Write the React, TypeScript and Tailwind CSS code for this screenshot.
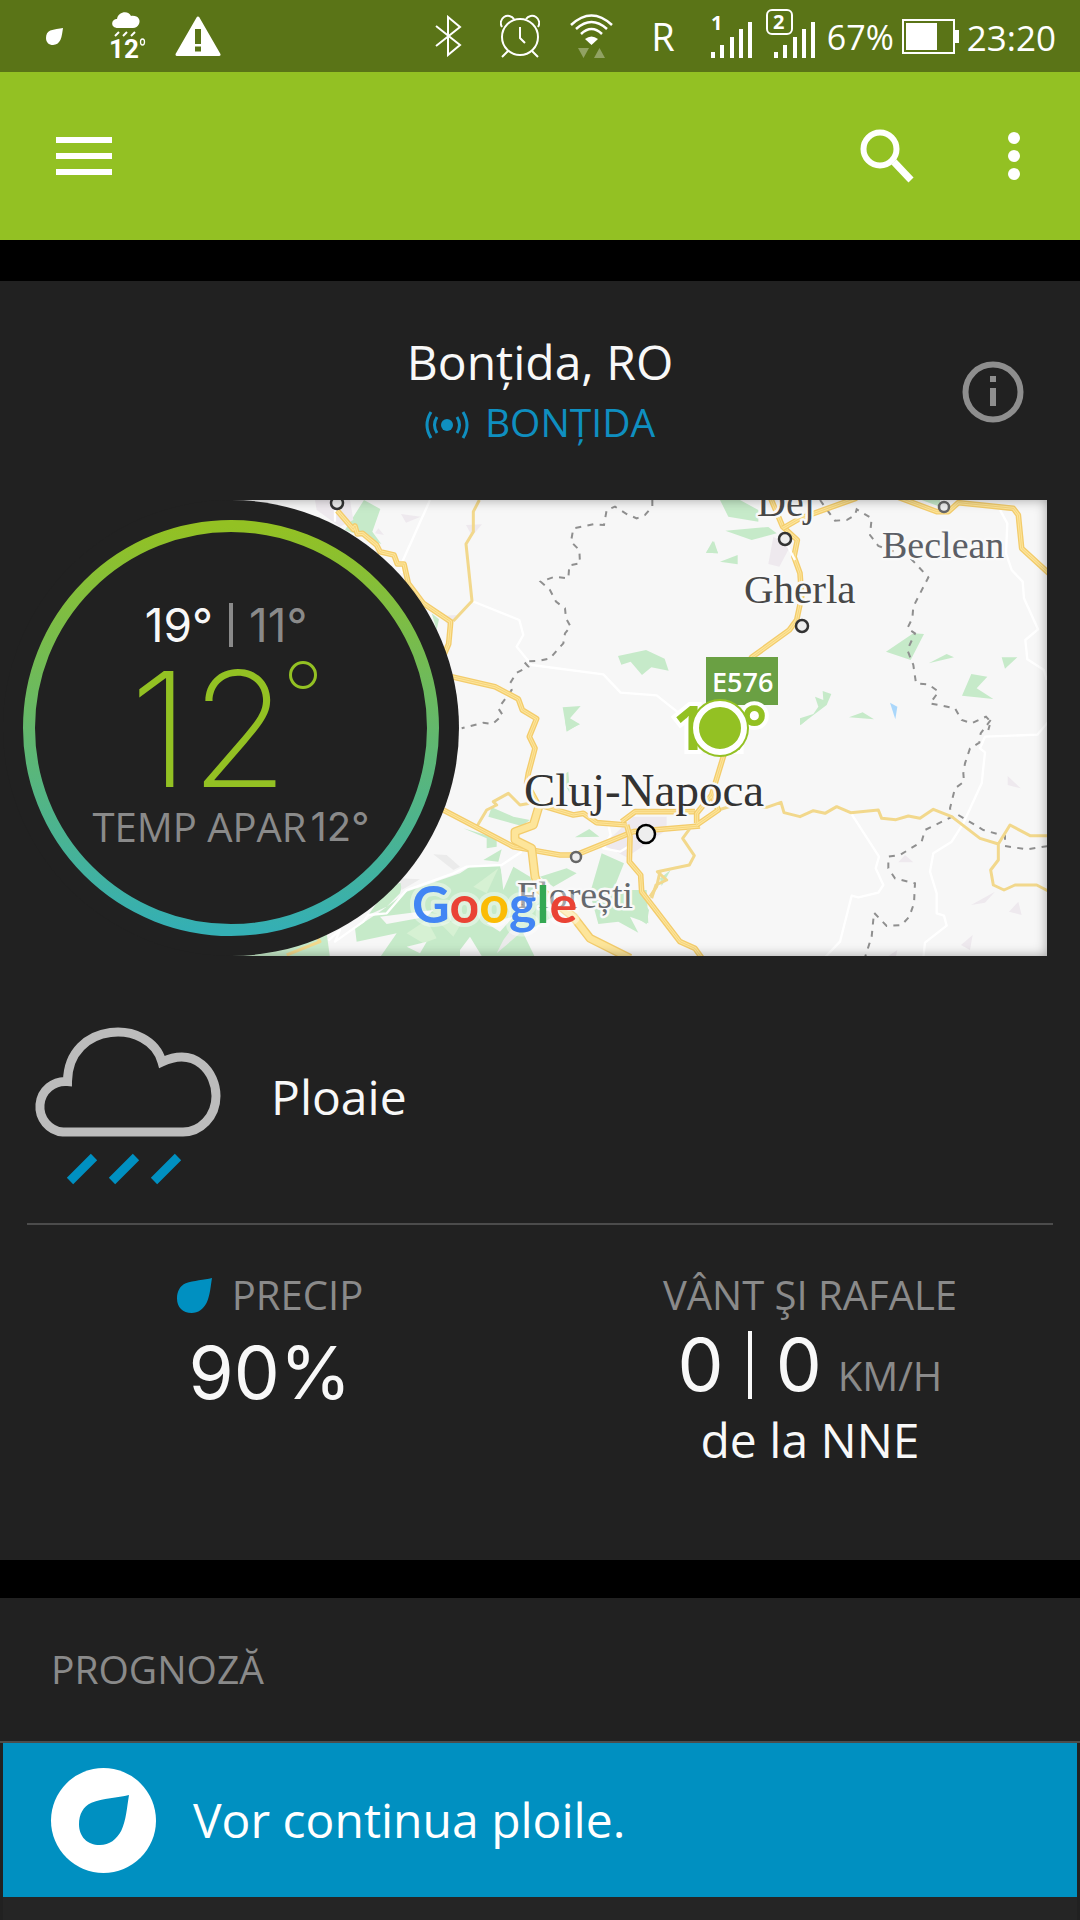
import type { ReactNode } from "react";

type Town = { x: number; y: number; r: number; color: string };

function Drop({ className }: { className?: string }) {
  return (
    <svg viewBox="0 0 36 36" className={className} fill="currentColor" aria-hidden="true">
      <path d="M36 0C34.500 9 34 18 30.500 25.500C27 32 22 36 15 36C6 36 0 30 0 21C0 14 3 8 9 5.500C17 2.500 28 2 36 0Z" />
    </svg>
  );
}

function SignalBars() {
  return (
    <g>
      <rect x="0" y="40" width="4" height="6" />
      <rect x="9" y="33" width="4" height="13" />
      <rect x="19" y="25" width="4" height="21" />
      <rect x="28" y="17" width="4" height="29" />
      <rect x="37" y="10" width="4" height="36" />
    </g>
  );
}

function StatusBar() {
  return (
    <div className="flex h-[72px] items-center justify-between bg-[#5a7417] pr-6 pl-[46px] text-white">
      <div className="flex items-center">
        <Drop className="size-[17px]" />
        <svg viewBox="0 0 34 48" className="ml-12 h-12 w-[34px] overflow-visible" fill="currentColor" aria-hidden="true">
          <path d="M7 16C-1 16 0 7 6 7C7 -1 18 -2 20 4C27 3 30 8 28 12Q26 16 22 16Z" />
          <path d="M4 24l4-4M12 24l4-4M20 24l4-4" stroke="currentColor" strokeWidth="2" />
          <text x="-2" y="46" fontSize="26" fontWeight="700" fontFamily="Roboto, sans-serif">
            12
          </text>
          <ellipse cx="31.500" cy="30" rx="2" ry="3" fill="none" stroke="currentColor" strokeWidth="1.300" />
        </svg>
        <svg viewBox="0 0 46 41" className="ml-[30px] h-[41px] w-[46px]" aria-hidden="true">
          <path d="M23 2L44 38.500H2Z" fill="white" stroke="white" strokeWidth="3" strokeLinejoin="round" />
          <path d="M20 13h6v15h-6zM20 30.500h6v5h-6z" fill="#5a7417" />
        </svg>
      </div>

      <div className="flex items-center">
        <svg viewBox="0 0 27 42" className="mr-[38px] h-[42px] w-[27px]" fill="none" stroke="white" strokeWidth="2" aria-hidden="true">
          <path d="M1 11L25 30L13 40V2L25 12L1 31" />
        </svg>
        <svg viewBox="0 0 40 44" className="mr-[30px] h-11 w-10" fill="none" stroke="white" strokeWidth="2" aria-hidden="true">
          <circle cx="20" cy="23" r="18" />
          <path d="M20 13V24L25 29M8 37L2 43M32 37L38 43" />
          <path d="M2 13A6.500 6.500 0 1 1 14 5M38 13A6.500 6.500 0 1 0 26 5" />
        </svg>
        <svg viewBox="0 0 43 44" className="mr-[38px] h-11 w-[43px]" fill="none" stroke="white" strokeWidth="2.500" aria-hidden="true">
          <path d="M1 11Q21.500 -8 42 11M6 15Q21.500 1 37 15M11 20Q21.500 10 32 20" />
          <path d="M15 25Q21.500 20 28 25L21.500 31Z" fill="white" stroke="none" />
          <path d="M8 34H19L13.500 44ZM24 44H35L29.500 34Z" fill="#91a263" stroke="none" />
        </svg>
        <span className="mr-9 text-[38px] leading-none">R</span>
        <svg viewBox="0 0 106 48" className="mr-2.5 h-12 w-[106px] overflow-visible" fill="white" fontFamily="Open Sans, sans-serif" fontWeight="700" aria-hidden="true">
          <SignalBars />
          <text x="0" y="18" fontSize="20">
            1
          </text>
          <g transform="translate(63 0)">
            <SignalBars />
          </g>
          <rect x="56" y="-2" width="25" height="24" rx="5" fill="#5a7417" stroke="white" strokeWidth="2" />
          <text x="62" y="17" fontSize="20">
            2
          </text>
        </svg>
        <span className="mr-2 pt-0.5 text-[34px] leading-none">67%</span>
        <svg viewBox="0 0 57 35" className="mr-2 h-[35px] w-[57px]" fill="white" aria-hidden="true">
          <rect x="1" y="1" width="51" height="33" fill="none" stroke="white" strokeWidth="2" />
          <rect x="4" y="4" width="31" height="27" />
          <rect x="52" y="11" width="5" height="13" />
        </svg>
        <span className="pt-0.5 text-[35px] leading-none">23:20</span>
      </div>
    </div>
  );
}

function AppBar() {
  return (
    <header className="flex h-[168px] items-center justify-between bg-[#93c123] pr-12 pl-14 text-white">
      <button type="button" aria-label="Meniu" className="flex w-14 flex-col gap-2.5 py-2">
        <span className="h-1.5 w-full bg-white" />
        <span className="h-1.5 w-full bg-white" />
        <span className="h-1.5 w-full bg-white" />
      </button>
      <div className="flex items-center gap-[82px]">
        <button type="button" aria-label="Căutare">
          <svg viewBox="0 0 54 54" className="size-[54px]" fill="none" stroke="white" strokeWidth="6">
            <circle cx="20" cy="20" r="16.500" />
            <path d="M34 33L51 51" strokeWidth="7" />
          </svg>
        </button>
        <button type="button" aria-label="Mai multe opțiuni" className="flex w-9 flex-col items-center gap-1.5">
          <span className="size-3 rounded-full bg-white" />
          <span className="size-3 rounded-full bg-white" />
          <span className="size-3 rounded-full bg-white" />
        </button>
      </div>
    </header>
  );
}

// Each quarter of the map is drawn on a grid three times finer than the page.
function Tile({ x, y, children }: { x: number; y: number; children: ReactNode }) {
  return <g transform={`translate(${x} ${y}) scale(0.33333)`}>{children}</g>;
}

function Road({ d }: { d: string }) {
  return (
    <g fill="none" strokeLinejoin="round">
      <path d={d} stroke="#f3cc6c" strokeWidth="17" />
      <path d={d} stroke="#fde59a" strokeWidth="9" />
      <path d={d} stroke="#f3cc6c" strokeWidth="2" />
    </g>
  );
}

function Highway({ d }: { d: string }) {
  return (
    <g fill="none" strokeLinejoin="round">
      <path d={d} stroke="#f3cc6c" strokeWidth="27" />
      <path d={d} stroke="#fde59a" strokeWidth="19" />
    </g>
  );
}

function MinorRoad({ d }: { d: string }) {
  return <path d={d} fill="none" stroke="#f2d88c" strokeWidth="9" strokeLinejoin="round" />;
}

function Lane({ d }: { d: string }) {
  return <path d={d} fill="none" stroke="#ffffff" strokeWidth="7" strokeLinejoin="round" />;
}

function Border({ d }: { d: string }) {
  return <path d={d} fill="none" stroke="#8f8f8f" strokeWidth="6" strokeDasharray="18 19" />;
}

const towns: Town[] = [
  { x: 337, y: 503, r: 6, color: "#333333" },
  { x: 785, y: 539, r: 6, color: "#333333" },
  { x: 944, y: 507, r: 5, color: "#666666" },
  { x: 802, y: 626, r: 6, color: "#333333" },
  { x: 576, y: 857, r: 5, color: "#666666" },
  { x: 646, y: 834, r: 9, color: "#000000" },
];

const labels = [
  { name: "Dej", x: 757, y: 516, size: 40, color: "#484848" },
  { name: "Gherla", x: 744, y: 603, size: 41, color: "#484848" },
  { name: "Beclean", x: 882, y: 558, size: 38, color: "#5c5f66" },
  { name: "Cluj-Napoca", x: 524, y: 806, size: 47, color: "#333333" },
  { name: "Florești", x: 517, y: 908, size: 38, color: "#66696e" },
];

function Map() {
  return (
    <svg viewBox="231 500 816 456" preserveAspectRatio="xMidYMid slice" className="h-full w-full bg-[#f7f7f7]" role="img" aria-label="Hartă Cluj-Napoca">
      <Tile x={320} y={490}>
        <path fill="#c6eac9" d="M132 30L181 57L157 125L184 162L130 140L75 120ZM335 370L357 388L350 420ZM894 498L978 480L1034 506L1046 542L994 532L966 555L932 515L904 524ZM728 652L782 648L750 685L780 703L740 722ZM1182 153L1194 190L1158 188Z" />
        <path fill="#eee9ee" d="M-15 30H90L100 90L60 110L-10 60ZM243 72L302 80L258 98ZM438 105L486 103L456 138ZM175 115L192 135L165 130ZM365 378L410 375L390 415Z" />
        <Lane d="M330 30L245 220V250M45 60V95M456 333L598 390L610 435L590 470L635 525L850 553L902 608L1010 616L1090 680" />
        <Border d="M997 30V50L975 75L950 85L920 72L885 50L860 60L852 105L820 103L760 115L753 155L778 180L780 220L748 226L745 265L705 260L662 275L690 300L708 335L735 355L738 385L752 410L735 430L730 460L712 480L690 505L660 512L612 515L625 530L590 548L570 580L575 600L535 655L548 675L518 702L490 698L425 715" />
        <MinorRoad d="M478 30L460 65V125L438 162L456 333L400 393" />
        <Road d="M52 62L100 118L105 108L112 132L128 130L170 165L180 185L222 195L232 222L252 222L265 280L310 340L392 395L386 462L365 510" />
        <Road d="M395 560L525 590L595 627L607 660L650 686L628 740L645 775L625 850L620 880L658 950" />
      </Tile>
      <Tile x={700} y={490}>
        <path fill="#c6eac9" d="M60 30H120L175 60V95L85 80ZM76 122L205 111L230 130L155 150ZM38 153L54 190L18 188ZM60 215L113 195V223ZM665 30H720V50ZM558 485L640 430L672 432L632 510ZM686 520L740 492L762 502ZM905 502H952L915 536ZM814 552L862 560L830 595L880 627L786 617ZM300 685L340 672L355 650L345 620L370 630L368 603L394 612L380 645L300 706ZM447 682L488 667L522 688Z" />
        <path fill="#aad7fb" d="M570 638L592 650L586 688Z" />
        <path fill="#eee9ee" d="M220 140L270 170L238 230L205 222Z" />
        <Lane d="M900 60L922 100L918 190L935 240L968 275L972 325L1014 418L976 450L982 508L1032 540L1040 570" />
        <Border d="M360 30L385 65L405 92L440 90L465 75L470 58L515 85L510 135L535 168L570 180L632 205L685 262L640 350L637 385L622 415L645 430L622 480L640 525L648 580L685 583L716 605L690 640L765 655L785 690L815 700L858 680L872 695L865 720" />
        <Road d="M210 20L248 110L292 150L282 200L300 250L305 320L290 390L268 420L155 502L70 620" />
        <Road d="M248 115L300 85L470 24M590 20L710 65L745 65L775 38L940 55L955 75L965 175L1050 253" />
        <Lane d="M262 165L285 210" />
      </Tile>
      <Tile x={220} y={720}>
        <path fill="#c6eac9" d="M1035 0L1078 12L1040 35ZM815 262L880 290L930 300L905 318L805 290ZM730 325L830 355V380L800 385V355ZM1020 170L1045 155L1050 220ZM845 388L835 425L790 420ZM1065 352L1108 327L1138 350ZM1145 400L1212 430L1180 510L1280 510L1285 610L1230 590L1255 638L1195 605L1135 612L1110 520ZM960 470L1040 445L1070 460L1000 500ZM505 500L550 485L540 520L500 560L445 585ZM0 712L320 640L330 712ZM480 575L560 515L720 460L750 440L840 437L850 480L880 440L930 470L960 540L1000 590L910 640L945 712H480L530 640L410 665L405 625Z" />
        <path fill="#d6f1d3" d="M560 640L620 600L650 655L610 670ZM660 610L730 600L700 650ZM760 500L835 445L800 520Z" />
        <path fill="#f7f7f7" d="M480 590L640 570L620 590L500 612ZM720 690L750 650L785 708H720ZM560 680L620 665L600 700ZM800 610L880 590L840 635ZM842 440L880 440L850 510Z" />
        <path fill="#ebebeb" d="M640 403L680 405L720 440L700 450ZM540 475L600 478L545 510ZM850 660L880 620L900 640L830 700Z" />
        <path fill="#eee9ee" d="M1150 375L1240 290H1340V330L1220 412Z" />
        <Lane d="M325 662L360 630L345 665L430 605L445 585L500 580L560 510L590 500L700 460L740 440L845 435L905 395M1165 315L1172 345L1150 385L1200 395L1225 380" />
        <MinorRoad d="M770 320L800 270L830 255L820 245L865 220L900 255L930 250M1320 455L1310 500L1290 530M200 705L300 665L290 650" />
        <Road d="M670 270L880 380L1020 405H1068L1240 335L1440 318" />
        <Road d="M960 255L1060 285L1090 280L1130 308L1220 315M1205 305L1245 275H1425M1220 315L1230 350L1228 425L1262 465L1265 515L1380 665L1425 685L1450 720" />
        <Highway d="M958 255L940 315L885 335V360L935 385L945 470L960 510L1060 590L1110 655L1230 715" />
      </Tile>
      <Tile x={640} y={720}>
        <path fill="#c6eac9" d="M60 475L92 450L65 498ZM0 530L27 570L20 613L0 600ZM480 0H500L482 15Z" />
        <path fill="#eee9ee" d="M1103 168L1142 205L1103 195ZM795 405L820 427H775ZM993 555L1065 515L1035 548ZM1135 545L1145 585L1107 575ZM998 645L990 690L963 675ZM772 690L768 708H745Z" />
        <Lane d="M632 278L717 410L707 445L730 495L715 518L655 532L635 527L600 665L555 712M1225 5L1192 44L1035 50L1020 85L1035 97L1025 190L970 310L935 365L880 400L870 455L890 520V580L912 587L920 617L855 668L850 712" />
        <Border d="M1052 0L1022 40L1018 68L990 85L975 130L970 160L972 185L945 205L930 265L937 290L855 330L845 365L780 405L745 410V445L765 475L825 490L822 550L808 590L785 615L740 618L702 578L695 650L675 712M955 285L1030 330L1095 348V378L1160 388L1225 378" />
        <MinorRoad d="M235 270L300 250L380 262L423 247L432 278L480 290L520 272L555 280L590 260L632 278L715 270L725 295L768 299L805 288L840 295L880 268L935 290L1020 355L1075 372L1110 315L1170 347H1225M1075 372V420L1052 450L1060 495L1092 510L1125 495H1190L1225 513M150 325L128 355L163 407L148 435L52 455L80 480L48 495L35 535" />
        <Road d="M253 100L215 225L170 280V310M215 225L235 270L170 315" />
      </Tile>

      {towns.map((town) => (
        <circle key={`${town.x}-${town.y}`} cx={town.x} cy={town.y} r={town.r} fill="#eeeeee" stroke={town.color} strokeWidth="2.500" />
      ))}

      <g fontFamily="Liberation Serif, serif" stroke="#f9f9f9" strokeWidth="5" strokeLinejoin="round" paintOrder="stroke">
        {labels.map((label) => (
          <text key={label.name} x={label.x} y={label.y} fontSize={label.size} fill={label.color}>
            {label.name}
          </text>
        ))}
      </g>

      <rect x="706" y="657" width="72" height="48" fill="#6aa043" />
      <text x="712" y="692" fontSize="27" fontWeight="600" fontFamily="Open Sans, sans-serif" fill="white">
        E576
      </text>
      <text x="720" y="750" textAnchor="middle" fontSize="60" fontWeight="700" fontFamily="Open Sans, sans-serif" fill="#93c123" stroke="white" strokeWidth="8" paintOrder="stroke">
        12°
      </text>
      <circle cx="720" cy="728" r="29" fill="#93c123" />
      <circle cx="720" cy="728" r="24" fill="#93c123" stroke="white" strokeWidth="6" />

      <text x="412" y="923" fontSize="52" fontFamily="Lato, sans-serif" fontWeight="700" stroke="#ffffff" strokeOpacity="0.4" strokeWidth="8" strokeLinejoin="round" paintOrder="stroke">
        <tspan fill="#4285f4">G</tspan>
        <tspan fill="#ea4335">o</tspan>
        <tspan fill="#fbbc05">o</tspan>
        <tspan fill="#4285f4">g</tspan>
        <tspan fill="#34a853">l</tspan>
        <tspan fill="#ea4335">e</tspan>
      </text>
    </svg>
  );
}

function TemperatureDial() {
  return (
    <div className="absolute top-0 left-[3px] flex size-[456px] flex-col items-center rounded-full bg-[#212121] pt-[97px]">
      <svg viewBox="0 0 456 456" className="absolute inset-0 size-full" fill="none" aria-hidden="true">
        <defs>
          <linearGradient id="ring" x1="0" y1="0" x2="0" y2="1">
            <stop offset="0" stopColor="#93c123" />
            <stop offset="1" stopColor="#34afb4" />
          </linearGradient>
        </defs>
        <circle cx="228" cy="228" r="202" stroke="url(#ring)" strokeWidth="12" />
      </svg>
      <p className="grid w-full grid-cols-[1fr_auto_1fr] items-center gap-4 font-[Inter,sans-serif] text-[46px] leading-[56px] text-[#8a8a8a]">
        <span className="text-right text-[#f8f8f8]">19°</span>
        <span className="h-11 w-1 bg-[#8a8a8a]" />
        <span>11°</span>
      </p>
      <p className="mt-2 flex h-[136px] items-start pr-4 font-[Inter,sans-serif] text-[160px] leading-[136px] font-extralight text-[#93c123]">
        12
        <span className="size-7 rounded-full border-3 border-[#93c123]" />
      </p>
      <p className="flex gap-1 text-[40px] leading-[60px] text-[#8a8a8a]">
        TEMP APAR<span className="font-[Inter,sans-serif]">12°</span>
      </p>
    </div>
  );
}

function CurrentConditions() {
  return (
    <main className="mt-[41px] bg-[#212121] pb-[85px]">
      <div className="grid h-[219px] grid-cols-[1fr_auto_1fr] items-center px-14 pt-0.5">
        <div className="col-start-2 text-center">
          <h1 className="text-[48px] leading-[60px] font-medium text-[#f8f8f8]">Bonțida, RO</h1>
          <a href="#bontida" className="flex items-center justify-center gap-4 text-[39px] leading-[60px] text-[#0f8fc0]">
            <svg viewBox="0 0 44 34" className="h-[34px] w-11" fill="none" stroke="currentColor" strokeWidth="3" aria-hidden="true">
              <circle cx="22" cy="20" r="6" fill="currentColor" stroke="none" />
              <path d="M6 7Q-2 20 6 33M12 12Q7 20 12 28M38 7Q46 20 38 33M32 12Q37 20 32 28" />
            </svg>
            BONȚIDA
          </a>
        </div>
        <button type="button" aria-label="Informații" className="justify-self-end text-[#8e8e8e]">
          <svg viewBox="0 0 62 62" className="size-[62px]" fill="none" stroke="currentColor" strokeWidth="6">
            <circle cx="31" cy="31" r="27.500" />
            <path d="M31 15V21M31 27V45" />
          </svg>
        </button>
      </div>

      <div className="relative mr-[33px]">
        <div className="relative ml-[231px] h-[456px]">
          <Map />
          <div className="absolute inset-0 shadow-[inset_0_0_12px_rgba(0,0,0,0.35)]" />
        </div>
        <TemperatureDial />
      </div>

      <section className="mx-[27px] flex items-center gap-[50px] border-b-2 border-[#4c4c4c] pt-[69px] pb-[38px] pl-1.5">
        <svg viewBox="0 0 188 160" className="h-40 w-[188px]" fill="none" strokeWidth="9" aria-hidden="true">
          <path d="M30 107A25 25 0 0 1 34.500 56.500C35 -4 117 -7 129 37C163 21 183 48 183 71C183 92 167 107 150 107Z" stroke="#bcbcbc" />
          <path d="M37 156L61 132M79 156L103 132M121 156L145 132" stroke="#0090c1" />
        </svg>
        <p className="pb-4 text-[48px] leading-[60px] text-[#f8f8f8]">Ploaie</p>
      </section>

      <section className="grid grid-cols-2 pt-[42px] text-center text-[#f8f8f8]">
        <div>
          <h2 className="flex items-center justify-center gap-5 text-[40px] leading-[56px] text-[#8a8a8a]">
            <Drop className="size-[35px] text-[#0090c1]" />
            PRECIP
          </h2>
          <p className="pt-2.5 font-[Inter,sans-serif] text-[73px] leading-[80px]">90%</p>
        </div>
        <div>
          <h2 className="text-[40px] leading-[56px] text-[#8a8a8a]">VÂNT ŞI RAFALE</h2>
          <p className="flex items-center justify-center gap-6 pt-0.5 text-[73px] leading-[80px]">
            <span className="font-[Inter,sans-serif]">0</span>
            <span className="h-[68px] w-1 bg-[#f8f8f8]" />
            <span className="flex items-baseline gap-4">
              <span className="font-[Inter,sans-serif]">0</span>
              <span className="text-[40px] leading-none text-[#8a8a8a]">KM/H</span>
            </span>
          </p>
          <p className="text-[48px] leading-[70px]">de la NNE</p>
        </div>
      </section>
    </main>
  );
}

function Forecast() {
  return (
    <section className="mt-[38px] bg-[#212121]">
      <h2 className="border-b-2 border-[#4c4c4c] px-[51px] pt-[42px] pb-[43px] text-[39px] leading-[58px] text-[#8a8a8a]">PROGNOZĂ</h2>
      <div className="mx-[3px] flex h-[154px] items-center gap-[37px] bg-[#0090c1] px-12">
        <span className="flex size-[105px] items-center justify-center rounded-full bg-white">
          <Drop className="size-[50px] text-[#0090c1]" />
        </span>
        <p className="text-[48px] leading-[60px] text-white">Vor continua ploile.</p>
      </div>
      <div className="mx-[3px] h-[23px] bg-[#252525]" />
    </section>
  );
}

export default function App() {
  return (
    <div className="bg-black font-['Open_Sans',sans-serif]">
      <StatusBar />
      <AppBar />
      <CurrentConditions />
      <Forecast />
    </div>
  );
}
